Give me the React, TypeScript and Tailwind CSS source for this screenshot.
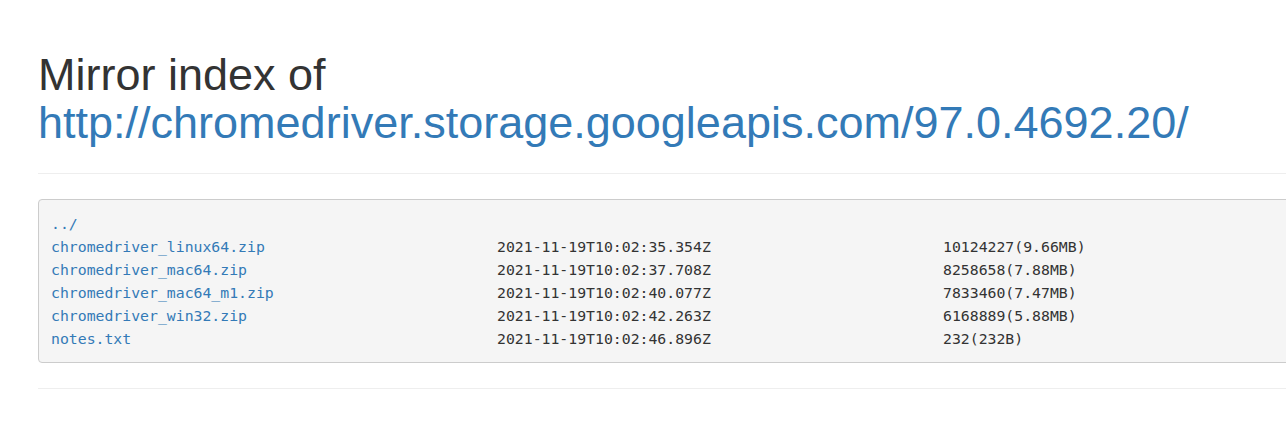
import React from "react";

const rows: [string, string, string][] = [
  ["chromedriver_linux64.zip", "2021-11-19T10:02:35.354Z", "10124227(9.66MB)"],
  ["chromedriver_mac64.zip", "2021-11-19T10:02:37.708Z", "8258658(7.88MB)"],
  ["chromedriver_mac64_m1.zip", "2021-11-19T10:02:40.077Z", "7833460(7.47MB)"],
  ["chromedriver_win32.zip", "2021-11-19T10:02:42.263Z", "6168889(5.88MB)"],
  ["notes.txt", "2021-11-19T10:02:46.896Z", "232(232B)"],
];

export default function App() {
  return (
    <div className="w-[1286px] h-[423px] overflow-hidden bg-white">
      <div className="w-[1400px] pl-[38px] pt-[51px]">
        <h1
          className="text-[45px] leading-[48px] text-[#333333] font-normal"
          style={{ fontFamily: '"Liberation Sans", Arial, sans-serif' }}
        >
          Mirror index of
          <br />
          <a className="text-[#337ab7]" href="#">
            http://chromedriver.storage.googleapis.com/97.0.4692.20/
          </a>
        </h1>
        <hr className="mt-[26px] mb-[25px] border-0 border-t border-[#eeeeee]" />
        <pre
          className="bg-[#f5f5f5] border border-[#cccccc] rounded-[4px] px-[12px] py-[12px] text-[14.8px] leading-[23px] text-[#333333]"
          style={{ fontFamily: '"DejaVu Sans Mono", "Liberation Mono", monospace' }}
        >
          <div>
            <a className="text-[#337ab7]" href="#">../</a>
          </div>
          {rows.map((r) => (
            <div key={r[0]} className="grid grid-cols-[446px_446px_auto]">
              <a className="text-[#337ab7]" href="#">{r[0]}</a>
              <span>{r[1]}</span>
              <span>{r[2]}</span>
            </div>
          ))}
        </pre>
        <hr className="mt-[25px] border-0 border-t border-[#eeeeee]" />
      </div>
    </div>
  );
}
